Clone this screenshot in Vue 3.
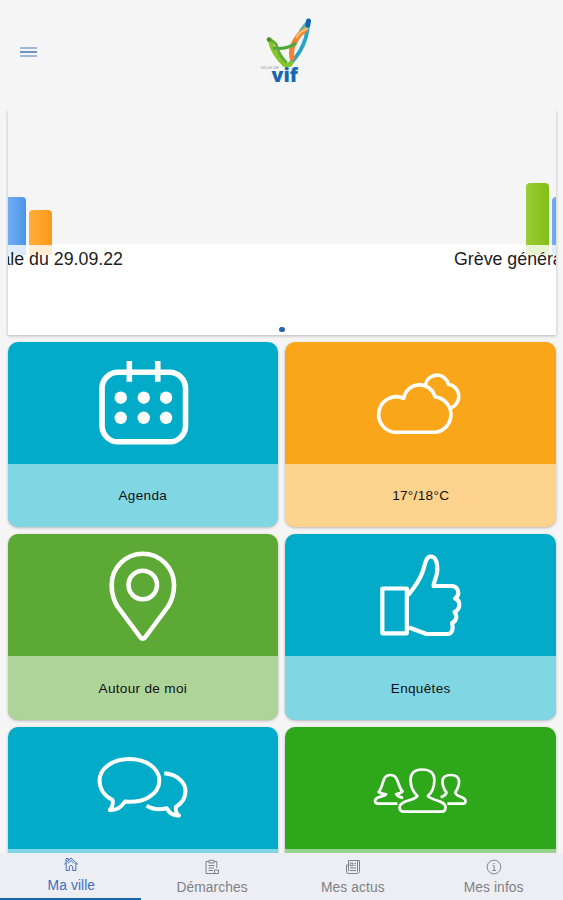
<template>
  <div class="app-page">
    <header class="top-bar">
      <button class="menu-btn" aria-label="Menu">
        <span></span>
        <span></span>
        <span></span>
      </button>
      <div class="logo">
        <svg class="logo-mark" viewBox="0 0 52 50">
          <path d="M46 6 Q39 13 35.500 24 Q32 29 31 33" fill="none" stroke="#56b9b4" stroke-width="3.4" />
          <path d="M47 8 Q46 22 39 34 Q35 41 28 48" fill="none" stroke="#27a5c2" stroke-width="3.8" stroke-linecap="round" />
          <path d="M45 12.500 Q36 18 31.500 29 Q29.500 36 31.500 43" fill="none" stroke="#f58233" stroke-width="5" />
          <path d="M47 11.500 Q39 14 35 21" fill="none" stroke="#f6c36a" stroke-width="2" />
          <path d="M9 23 Q12 37 24 48 Q27 50 30 46" fill="none" stroke="#86c62b" stroke-width="4.600" stroke-linecap="round" />
          <path d="M9 23 Q15 25 16.500 31 Q18 38 25 45" fill="none" stroke="#5fae34" stroke-width="3" stroke-linecap="round" />
          <path d="M12 31 Q26 33 35 26" fill="none" stroke="#4fa83e" stroke-width="3" />
          <path d="M47.500 4 L46.800 8" fill="none" stroke="#1762ac" stroke-width="5" stroke-linecap="round" />
          <circle cx="8" cy="22.500" r="2.300" fill="#4c8f2f" />
        </svg>
        <div class="logo-text"><small>VILLE DE</small><b>vif</b></div>
      </div>
    </header>

    <main class="content">
      <section class="slider">
        <div class="slides">
          <div class="slide slide-prev">
            <div class="bars">
              <i class="bar blue"></i>
              <i class="bar orange"></i>
            </div>
            <div class="caption"><span>Grève générale du 29.09.22</span></div>
          </div>
          <div class="slide slide-next">
            <div class="bars">
              <i class="bar green"></i>
              <i class="bar blue"></i>
            </div>
            <div class="caption"><span>Grève générale du 29.09.22</span></div>
          </div>
        </div>
        <i class="bullet"></i>
      </section>

      <section class="tiles">
        <div v-for="tile in tiles" :key="tile.name" class="tile" :class="tile.color">
          <svg class="tile-icon" viewBox="0 0 270.5 122" :stroke-width="tile.stroke">
            <path v-for="(d, i) in tile.paths" :key="i" :d="d" />
            <!-- days of the calendar -->
            <template v-if="tile.name === 'agenda'">
              <circle v-for="dot in dots" :key="dot.join()" class="dot" :cx="dot[0]" :cy="dot[1]" r="6.2" />
            </template>
            <circle v-if="tile.name === 'map'" cx="134.7" cy="51" r="14.2" />
          </svg>
          <div class="tile-label">{{ tile.label }}</div>
        </div>
      </section>
    </main>

    <nav class="tabs">
      <button
        v-for="tab in tabs"
        :key="tab.label"
        class="tab"
        :class="{ active: tab.label === current }"
        @click="current = tab.label"
      >
        <svg viewBox="0 0 16 16">
          <path v-for="(d, i) in tab.paths" :key="i" :d="d" />
        </svg>
        <span>{{ tab.label }}</span>
      </button>
    </nav>
  </div>
</template>

<script setup>
import { ref } from "vue";

const current = ref("Ma ville");

const dots = [
  [112.7, 55.7],
  [135.7, 55.7],
  [158, 55.7],
  [112.7, 75.8],
  [135.7, 75.8],
  [158, 75.8],
];

const tiles = [
  {
    name: "agenda",
    label: "Agenda",
    color: "teal",
    stroke: 5.6,
    paths: [
      "M110 30.3 H161.500 A16 16 0 0 1 177.500 46.300 V83.800 A16 16 0 0 1 161.500 99.800 H110 A16 16 0 0 1 94 83.800 V46.300 A16 16 0 0 1 110 30.300Z",
      "M121.3 19 V39.700 M149.700 19 V39.700",
    ],
  },
  {
    name: "weather",
    label: "17°/18°C",
    color: "orange",
    stroke: 3.6,
    paths: [
      "M112.500 90.3 A17.800 17.800 0 1 1 118.700 56.300 A16 16 0 0 1 150 54.900 A17.800 17.800 0 0 1 150 90.300Z",
      "M140.300 43 A11.700 11.700 0 0 1 163.300 42.300 A12.300 12.300 0 0 1 166.500 65.700",
    ],
  },
  {
    name: "map",
    label: "Autour de moi",
    color: "green",
    stroke: 4.6,
    paths: [
      "M132.500 103.500 L109.500 72.500 C106 67 103.600 60 103.600 51 A31.200 31.200 0 0 1 166 51 C166 60 163.500 67 160 72.500 L137 103.500 Q134.700 106 132.500 103.500Z",
    ],
  },
  {
    name: "survey",
    label: "Enquêtes",
    color: "teal",
    stroke: 4.2,
    paths: [
      "M97.300 54.500 H121.800 V99.300 H97.300Z",
      "M123 61 C130 53 134.500 46 137.500 38 C140 31 140.500 22.500 145.700 22.500 C151 22.500 152.300 30 152.300 36 C152.300 43 148.800 46 148.500 52 H167 Q173 52.500 173.300 59.300 Q172.500 63 170 64.500 C176 67 175.500 75 169.500 78 C172.500 82 171.500 87 167 89 C168.500 94 167.500 100 162.500 100 H141.500 L124 93.500",
    ],
  },
  {
    name: "chat",
    label: "Idées",
    color: "teal",
    stroke: 4,
    paths: [
      "M117 74.500 C113 80.500 107 83.500 101.800 83 C105 79 105.500 76 104.300 72.800 C96 69 91.500 61.500 91.500 53.500 C91.500 41 105 32 121.500 32 C138.500 32 151.300 41.500 151.300 53.500 C151.300 68 134.500 76.500 117 74.500Z",
      "M156.300 46.300 C169.500 47.500 177.500 55.500 177.500 64 C177.500 71.500 173.500 76.500 167.800 80 C167.500 84 168.500 87 171 88.500 C165.500 89 161.500 86.500 158.700 81.300 C151 83 143.500 82 138.700 78.700",
    ],
  },
  {
    name: "people",
    label: "Associations",
    color: "grass",
    stroke: 2.7,
    paths: [
      "M132.300 69 C127 64 125.500 57 125.500 53 C125.500 46 130 42.500 137.300 42.500 C144.500 42.500 149.300 46 149.300 53 C149.300 59 147.500 65 142.800 69 C147 74 159.800 73 160.500 80 C160.500 83 159 84.700 156.500 84.700 H119 C116 84.700 114.500 83 114.500 80 C115.500 73 129.500 74 132.300 69Z",
      "M112.300 76.700 H92.500 Q89.800 76.200 90 73.500 C91 69 98 70.500 101 67.300 Q97 67 93.500 65 C99 59 96.500 48 105.300 48 C114 48 112 59 117.500 64.500 Q115 67 111 67 Q113 70 118 71",
      "M155.700 70.500 C158 69 160.500 68.500 161.500 65.700 C158.500 62 157.300 57 157.500 53.500 C158 49.500 161 48 165.500 48 C170 48 173.500 49.500 174 54 C174.200 59 172.500 62 170.200 65.500 C171.500 71 180 68.500 180.500 74 Q180.500 76.700 178 76.700 H162.300",
    ],
  },
];

const tabs = [
  {
    label: "Ma ville",
    paths: ["M1 8.500 L8 2 L15 8.500", "M3.200 7 V14.500 H6.300 V10.500 Q8 8 9.700 10.500 V14.500 H12.900 V7", "M3 6 V2.500 H5.200 V4.500", "M4.800 7.500 L8 4.500 L11.300 7.500"],
  },
  {
    label: "Démarches",
    paths: ["M5 2.500 H2 V14.500 H12.500 M10 2.500 H12.800 V9", "M5 1.300 H10 V4 H5Z", "M4.500 6.500 H10.500 M4.500 9 H10 M4.500 11.500 H9", "M10.500 11 H14.500 V14.500 H10.500Z"],
  },
  {
    label: "Mes actus",
    paths: ["M3.500 1.500 H14.500 V12.500 Q14 14.500 12 14.500 H3 Q1.300 14 1.500 12 V6 H3.500Z", "M12.500 2 V12.500", "M5.300 4 H8 V6.800 H5.300Z", "M9.500 4.500 H11 M9.500 6.500 H11 M5 9 H11 M5 11.500 H11 M3.500 6 V12"],
  },
  {
    label: "Mes infos",
    paths: ["M8 1.200 A6.800 6.800 0 1 1 7.990 1.200Z", "M6.500 6.800 H8.200 V11.500 M6.300 11.500 H10 M7.500 4.500 H8.700"],
  },
];
</script>

<style>
body {
  background: #f5f5f5;
}
</style>

<style scoped>
.app-page {
  display: flex;
  flex-direction: column;
  height: 900px;
  overflow: hidden;
  background: #f5f5f5;
  font-family: "Liberation Sans", Arial, sans-serif;
}
button {
  border: none;
  background: none;
  padding: 0;
  font-family: inherit;
}

/* header */
.top-bar {
  display: grid;
  grid-template-columns: 1fr 52px 1fr;
  height: 110px;
  flex: none;
  box-sizing: border-box;
  padding-top: 17px;
}
.menu-btn {
  display: flex;
  flex-direction: column;
  gap: 2px;
  width: 17px;
  margin: 30px 0 0 20px;
  align-self: start;
}
.menu-btn span {
  height: 2px;
  background: #a3b7d8;
}
.menu-btn span:nth-child(2) {
  background: #6f92c5;
}
.logo {
  display: flex;
  flex-direction: column;
  margin-left: 5px;
}
.logo-mark {
  width: 52px;
  height: 50px;
}
.logo-text {
  display: flex;
  align-items: flex-start;
  margin-top: -3px;
  color: #1767ae;
  line-height: 1;
}
.logo-text small {
  width: 11px;
  margin-top: 1px;
  font-size: 4.2px;
  line-height: 5px;
  white-space: nowrap;
  color: #7d93bd;
}
.logo-text b {
  font-family: "Open Sans", sans-serif;
  font-weight: 800;
  font-size: 19.5px;
  line-height: 22px;
}

/* slider */
.content {
  flex: 1;
  min-height: 0;
  overflow: hidden;
  padding: 0 7px 0 7.5px;
}
.slider {
  position: relative;
  height: 225px;
  overflow: hidden;
  background: #f5f5f5;
  box-shadow: 0 1px 3px rgba(0, 0, 0, 0.25);
}
.slides {
  display: flex;
  justify-content: space-between;
  height: 100%;
  background: linear-gradient(#f5f5f5 134.5px, #fefefe 134.5px);
}
.slide {
  display: flex;
  flex-direction: column;
}
.slide-prev {
  width: 115.5px;
}
.slide-next {
  width: 102px;
}
.bars {
  display: flex;
  align-items: flex-end;
  height: 145px;
  flex: none;
  gap: 3.5px;
}
.slide-next .bars {
  padding-left: 71.5px;
}
.bar {
  width: 23px;
  flex: none;
  border-radius: 4px 4px 0 0;
}
.slide-prev .blue {
  width: 18px;
  border-radius: 0 4px 0 0;
}
.bar.blue {
  height: 58px;
  background: linear-gradient(90deg, #73acf0, #4b95e8);
}
.bar.orange {
  height: 45px;
  background: linear-gradient(90deg, #ffae3b, #fd9818);
}
.bar.green {
  height: 72px;
  background: linear-gradient(90deg, #9ccc37, #82bf16);
}
.caption {
  display: flex;
  flex: 1;
  margin-top: -10.5px;
  padding-top: 3.5px;
  background: rgba(255, 255, 255, 0.8);
  font-size: 17.8px;
  line-height: 22px;
  white-space: nowrap;
  color: #1c1c1c;
  z-index: 1;
}
.slide-prev .caption {
  justify-content: flex-end;
}
.bullet {
  position: absolute;
  left: 271.5px;
  bottom: 3px;
  width: 5.5px;
  height: 5.5px;
  border-radius: 50%;
  background: #2763b3;
  z-index: 2;
}

/* tiles */
.tiles {
  display: grid;
  grid-template-columns: 1fr 1fr;
  gap: 7.3px;
  margin-top: 6.7px;
}
.tile {
  height: 185.3px;
  border-radius: 10px;
  overflow: hidden;
  box-shadow: 0 1px 3px rgba(0, 0, 0, 0.25);
}
.teal {
  background: #02acc8;
}
.orange {
  background: #faa61a;
}
.tile.green {
  background: #5da935;
}
.grass {
  background: #2fa71b;
}
.tile-icon {
  display: block;
  width: 100%;
  height: 122px;
  fill: none;
  stroke: #fff;
  stroke-linejoin: round;
}
.dot {
  fill: #fff;
  stroke: none;
}
.tile-label {
  display: flex;
  align-items: center;
  justify-content: center;
  height: 64px;
  background: rgba(255, 255, 255, 0.5);
  font-size: 13.6px;
  letter-spacing: 0.3px;
  color: #111;
}

/* bottom tabs */
.tabs {
  display: grid;
  grid-template-columns: repeat(4, 1fr);
  height: 47px;
  flex: none;
  background: #edeef3;
}
.tab {
  display: flex;
  flex-direction: column;
  align-items: center;
  box-sizing: border-box;
  padding: 6px 0 0 2px;
  font-size: 13.8px;
  line-height: 17px;
  letter-spacing: 0.1px;
  color: #808185;
}
.tab svg {
  width: 16px;
  height: 16px;
  margin-bottom: 4px;
  fill: none;
  stroke: currentColor;
  stroke-width: 1;
}
.tab.active {
  padding-top: 3px;
  border-bottom: 2px solid #1765ad;
  color: #3f70bd;
}
.tab.active svg {
  margin-bottom: 5px;
}
</style>
